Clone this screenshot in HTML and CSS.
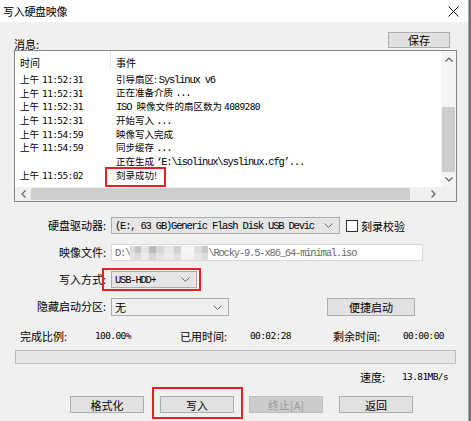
FILE: index.html
```html
<!DOCTYPE html>
<html lang="zh-CN">
<head>
<meta charset="utf-8">
<title>写入硬盘映像</title>
<link rel="stylesheet" href="styles.css">
</head>
<body>
<div class="window">
  <div class="titlebar">
    <span class="title">写入硬盘映像</span>
    <svg class="close" width="11" height="11" viewBox="0 0 11 11"><path d="M0.5 0.5L10.5 10.5M10.5 0.5L0.5 10.5" stroke="#111" stroke-width="1" fill="none"/></svg>
  </div>
  <div class="content">
    <div class="msg-head">
      <span class="msg-label">消息:</span>
      <div class="btn btn-save">保存</div>
    </div>

    <div class="listbox">
      <div class="list-main">
        <div class="list-header">
          <div class="col-time">时间</div>
          <div class="col-event col-event-head">事件</div>
        </div>
        <div class="row"><div class="col-time"><span class="am">上午</span><span class="num">11:52:31</span></div><div class="col-event">引导扇区: <span class="lat">Syslinux v6</span></div></div>
        <div class="row"><div class="col-time"><span class="am">上午</span><span class="num">11:52:31</span></div><div class="col-event">正在准备介质 <span class="lat">...</span></div></div>
        <div class="row"><div class="col-time"><span class="am">上午</span><span class="num">11:52:31</span></div><div class="col-event"><span class="lat">ISO </span>映像文件的扇区数为 <span class="num">4089280</span></div></div>
        <div class="row"><div class="col-time"><span class="am">上午</span><span class="num">11:52:31</span></div><div class="col-event">开始写入 <span class="lat">...</span></div></div>
        <div class="row"><div class="col-time"><span class="am">上午</span><span class="num">11:54:59</span></div><div class="col-event">映像写入完成</div></div>
        <div class="row"><div class="col-time"><span class="am">上午</span><span class="num">11:54:59</span></div><div class="col-event">同步缓存 <span class="lat">...</span></div></div>
        <div class="row"><div class="col-time"></div><div class="col-event">正在生成 <span class="lat">‘E:\isolinux\syslinux.cfg’...</span></div></div>
        <div class="row"><div class="col-time"><span class="am">上午</span><span class="num">11:55:02</span></div><div class="col-event"><span class="mark mark-list">刻录成功!</span></div></div>
      </div>
      <div class="vscroll">
        <div class="sb-btn"><svg width="8" height="5" viewBox="0 0 8 5"><polyline points="0.5,4.5 4,1 7.5,4.5" fill="none" stroke="#606060" stroke-width="1.2"/></svg></div>
        <div class="sb-space"></div>
        <div class="vthumb"></div>
        <div class="sb-btn sb-btn-down"><svg width="8" height="5" viewBox="0 0 8 5"><polyline points="0.5,0.5 4,4 7.5,0.5" fill="none" stroke="#606060" stroke-width="1.2"/></svg></div>
      </div>
      <div class="hscroll">
        <div class="sb-btn-h"><svg width="5" height="8" viewBox="0 0 5 8"><polyline points="4.5,0.5 1,4 4.5,7.5" fill="none" stroke="#606060" stroke-width="1.2"/></svg></div>
        <div class="hthumb"></div>
        <div class="sb-space"></div>
        <div class="sb-btn-h"><svg width="5" height="8" viewBox="0 0 5 8"><polyline points="0.5,0.5 4,4 0.5,7.5" fill="none" stroke="#606060" stroke-width="1.2"/></svg></div>
      </div>
      <div class="corner"></div>
    </div>

    <div class="form">
      <div class="f-label">硬盘驱动器:</div>
      <div class="f-ctrl">
        <div class="select select-drive"><span class="lat sel-text">(E:, 63 GB)Generic Flash Disk USB Devic</span><svg class="chev" width="9" height="5" viewBox="0 0 9 5"><polyline points="0.5,0.5 4.5,4.5 8.5,0.5" fill="none" stroke="#6a6a6a" stroke-width="1"/></svg></div>
        <span class="checkbox"></span><span class="cb-label">刻录校验</span>
      </div>

      <div class="f-label">映像文件:</div>
      <div class="f-ctrl">
        <div class="input"><span class="lat">D:\</span><span class="blur"></span><span class="lat">\Rocky-9.5-x86_64-minimal.iso</span></div>
      </div>

      <div class="f-label">写入方式:</div>
      <div class="f-ctrl">
        <div class="mark mark-mode">
          <div class="select select-mode"><span class="lat sel-text">USB-HDD+</span><svg class="chev" width="9" height="5" viewBox="0 0 9 5"><polyline points="0.5,0.5 4.5,4.5 8.5,0.5" fill="none" stroke="#6a6a6a" stroke-width="1"/></svg></div>
        </div>
      </div>

      <div class="f-label">隐藏启动分区:</div>
      <div class="f-ctrl">
        <div class="select select-hide"><span class="sel-text">无</span><svg class="chev" width="9" height="5" viewBox="0 0 9 5"><polyline points="0.5,0.5 4.5,4.5 8.5,0.5" fill="none" stroke="#6a6a6a" stroke-width="1"/></svg></div>
        <div class="btn btn-quick">便捷启动</div>
      </div>
    </div>

    <div class="stats">
      <span>完成比例:</span><span class="num">100.00%</span>
      <span>已用时间:</span><span class="num">00:02:28</span>
      <span>剩余时间:</span><span class="num">00:00:00</span>
    </div>

    <div class="progress"></div>

    <div class="speed"><span class="speed-label">速度:</span><span class="num">13.81MB/s</span></div>

    <div class="actions">
      <div class="btn btn-act">格式化</div>
      <div class="mark mark-write"><div class="btn btn-act">写入</div></div>
      <div class="btn btn-act btn-disabled">终止[A]</div>
      <div class="btn btn-act">返回</div>
    </div>
  </div>
</div>
</body>
</html>
```

FILE: styles.css
```css
* { box-sizing: border-box; }

html, body {
  margin: 0;
  padding: 0;
}

body {
  width: 471px;
  height: 421px;
  overflow: hidden;
  background: #6e6e6e;
  font-family: "Noto Sans CJK SC", "Microsoft YaHei", sans-serif;
  font-size: 11px;
  color: #000;
}

.window {
  width: 469px;
  height: 421px;
  background: #f0f0f0;
  border-right: 1px solid #a8a8a8;
  display: flex;
  flex-direction: column;
}

.titlebar {
  height: 22px;
  background: #fff;
  display: flex;
  align-items: center;
  justify-content: space-between;
  padding: 0 9px 0 3px;
}

.title {
  font-size: 11px;
  line-height: 22px;
  letter-spacing: -0.3px;
}

.close { display: block; margin-top: 1px; }

.content {
  flex: 1;
  display: flex;
  flex-direction: column;
}

.msg-head {
  margin-top: 10px;
  height: 16px;
  display: flex;
  justify-content: space-between;
  align-items: flex-end;
  padding: 0 18px 0 14px;
}

.msg-label {
  line-height: 14px;
  margin-bottom: -3px;
}

.btn {
  background: #e1e1e1;
  border: 1px solid #adadad;
  display: flex;
  align-items: center;
  justify-content: center;
  font-size: 11px;
  line-height: 14px;
}

.btn-save {
  width: 62px;
  height: 16px;
}

/* ---------- list box ---------- */
.listbox {
  margin: 2px 0 0 14px;
  width: 443px;
  height: 152px;
  border: 1px solid #828790;
  background: #fff;
  display: grid;
  grid-template-columns: 426px 15px;
  grid-template-rows: 136px 14px;
}

.list-main {
  overflow: hidden;
  font-size: 9.5px;
}

.list-header {
  height: 22px;
  display: flex;
  align-items: center;
}

.col-time {
  width: 95px;
  padding-left: 5px;
  flex: none;
  white-space: nowrap;
}

.col-event {
  padding-left: 6px;
  white-space: nowrap;
  overflow: visible;
}

.col-event-head {
  border-left: 1px solid #e5e5e5;
  padding-left: 5px;
  height: 18px;
  display: flex;
  align-items: center;
  margin-top: -4px;
  padding-top: 4px;
}

.list-header .col-time,
.list-header .col-event { font-size: 10px; }

.row {
  height: 13.7px;
  line-height: 13.7px;
  display: flex;
  align-items: center;
}

.am { margin-right: 3px; }

.lat {
  font-family: "Liberation Mono", monospace;
  font-size: 10.5px;
  letter-spacing: -1.2px;
}

.num {
  font-family: "DejaVu Sans Mono", monospace;
  font-size: 9.5px;
  letter-spacing: -0.6px;
}

.mark { position: relative; display: inline-block; }
.mark::after {
  content: "";
  position: absolute;
  border: 2px solid #ec1c24;
  pointer-events: none;
}
.mark-list::after { left: -11px; right: -9px; top: -2px; bottom: -4px; }

/* scrollbars */
.vscroll {
  background: #f4f4f4;
  display: flex;
  flex-direction: column;
}
.sb-btn {
  height: 16px;
  display: flex;
  align-items: center;
  justify-content: center;
}
.sb-btn-down { height: 15px; }
.sb-space { flex: 1; }
.vthumb {
  height: 65px;
  margin: 0 1px;
  background: #cdcdcd;
}

.hscroll {
  background: #f0f0f0;
  display: flex;
  align-items: stretch;
}
.sb-btn-h {
  width: 16px;
  display: flex;
  align-items: center;
  justify-content: center;
}
.hthumb {
  width: 379px;
  margin: 1px 0;
  background: #cdcdcd;
}
.corner { background: #f0f0f0; }

/* ---------- form ---------- */
.form {
  margin-top: 15px;
  display: grid;
  grid-template-columns: 106px 1fr;
  grid-auto-rows: 17px;
  column-gap: 5px;
  row-gap: 10px;
}
.form > :nth-child(7), .form > :nth-child(8) { height: 18px; }

.f-label {
  text-align: right;
  line-height: 17px;
  white-space: nowrap;
}

.f-ctrl {
  display: flex;
  align-items: center;
}

.select {
  height: 17px;
  background: #e5e5e5;
  border: 1px solid #acacac;
  display: flex;
  align-items: center;
  justify-content: space-between;
  padding: 0 6px 0 3px;
  overflow: hidden;
}
.sel-text { white-space: nowrap; overflow: hidden; }
.chev { flex: none; margin-left: 4px; }

.select-drive { width: 229px; }
.select-drive .sel-text { width: 202px; }
.select-mode { width: 86px; }
.select-hide { width: 118px; height: 18px; background: #efefef; }

.checkbox {
  width: 12px;
  height: 12px;
  border: 1px solid #333;
  background: #fff;
  margin-left: 6px;
}
.cb-label { margin-left: 3px; font-size: 11px; }

.input {
  width: 312px;
  height: 17px;
  background: #fff;
  border: 1px solid #d9d9d9;
  display: flex;
  align-items: center;
  padding-left: 3px;
  color: #6a6a6a;
  white-space: nowrap;
}
.blur {
  width: 78px;
  height: 14px;
  background:
    linear-gradient(180deg, rgba(255,255,255,0) 0 50%, rgba(240,240,240,0.5) 50%),
    linear-gradient(90deg, #dcdcdc 0 6%, #c4c4c4 6% 14%, #e4e4e4 14% 24%, #bcbcbc 24% 33%, #d6d6d6 33% 44%, #e8e8e8 44% 56%, #d0d0d0 56% 66%, #f6f6f6 66% 82%, #dedede 82% 92%, #c8c8c8 92%);
  filter: blur(0.6px);
}

.mark-mode::after { left: -9px; right: -4px; top: -3px; bottom: -3px; }

.btn-quick {
  width: 88px;
  height: 18px;
  margin-left: 98px;
}

/* ---------- stats ---------- */
.stats {
  margin-top: 14px;
  height: 14px;
  padding-left: 20px;
  display: grid;
  grid-template-columns: 75px 85px 70px 83px 70px auto;
  align-items: center;
  line-height: 14px;
}

.progress {
  margin: 7px 12px 0 15px;
  height: 14px;
  background: #e6e6e6;
  border: 1px solid #bcbcbc;
}

.speed {
  margin-top: 6px;
  height: 14px;
  padding-left: 360px;
  display: flex;
  align-items: center;
  line-height: 14px;
}
.speed-label { width: 42px; }

/* ---------- actions ---------- */
.actions {
  margin-top: 12px;
  padding-left: 70px;
  display: flex;
  gap: 16px;
}
.actions .btn-act:nth-child(3) { margin-left: -1px; }

.btn-act {
  width: 74px;
  height: 17px;
}
.btn-disabled {
  background: #cccccc;
  border-color: #bfbfbf;
  color: #9a9a9a;
}
.mark-write::after { left: -8px; right: -9px; top: -9px; bottom: -6px; }
```
